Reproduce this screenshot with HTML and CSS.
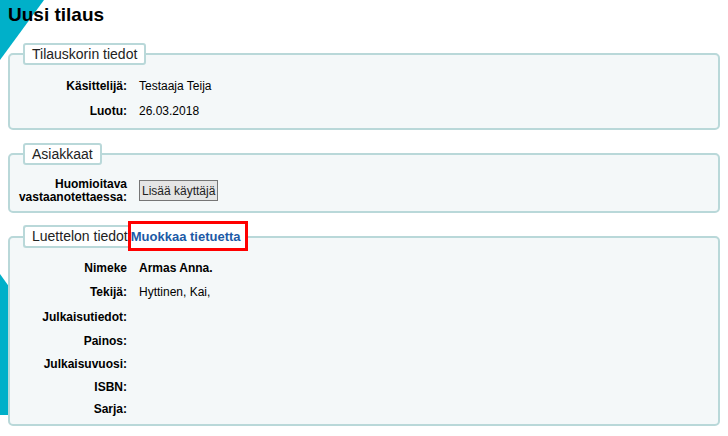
FILE: index.html
```html
<!DOCTYPE html>
<html lang="fi">
<head>
<meta charset="utf-8">
<title>Uusi tilaus</title>
<link rel="stylesheet" href="styles.css">
</head>
<body>
<svg class="deco" width="60" height="436" viewBox="0 0 60 436" aria-hidden="true">
  <polygon points="0,0 44,0 0,60" fill="#00b0c9"/>
  <polygon points="0,274 20,302 20,415 0,415" fill="#00b0c9"/>
</svg>
<h1 class="title">Uusi tilaus</h1>

<fieldset class="box box-first">
  <legend class="box-legend">Tilauskorin tiedot</legend>
  <div class="row r25"><span class="lbl">Käsittelijä:</span><span class="val">Testaaja Teija</span></div>
  <div class="row r25"><span class="lbl">Luotu:</span><span class="val">26.03.2018</span></div>
</fieldset>

<fieldset class="box box-second">
  <legend class="box-legend">Asiakkaat</legend>
  <div class="row row-multi"><span class="lbl lbl-multi">Huomioitava vastaanotettaessa:</span><span class="val"><button class="btn" type="button">Lisää käyttäjä</button></span></div>
</fieldset>

<fieldset class="box box-third">
  <legend class="box-legend legend-link">Luettelon tiedot<a class="edit-link" href="#">Muokkaa tietuetta</a></legend>
  <div class="row h23"><span class="lbl">Nimeke</span><span class="val val-bold">Armas Anna.</span></div>
  <div class="row h26"><span class="lbl">Tekijä:</span><span class="val">Hyttinen, Kai,</span></div>
  <div class="row h24"><span class="lbl">Julkaisutiedot:</span><span class="val"></span></div>
  <div class="row h23"><span class="lbl">Painos:</span><span class="val"></span></div>
  <div class="row h23"><span class="lbl">Julkaisuvuosi:</span><span class="val"></span></div>
  <div class="row h23"><span class="lbl">ISBN:</span><span class="val"></span></div>
  <div class="row h22"><span class="lbl">Sarja:</span><span class="val"></span></div>
</fieldset>
</body>
</html>
```
FILE: styles.css
```css
html {
  background: #ffffff;
}
body {
  margin: 0;
  padding: 0 8px;
  font-family: "Liberation Sans", Arial, sans-serif;
  font-size: 12px;
  color: #000;
  position: relative;
}
.deco {
  position: absolute;
  left: 0;
  top: 0;
  z-index: -1;
}
.title {
  margin: 4px 0 0;
  font-size: 19px;
  line-height: 22px;
  font-weight: bold;
  color: #000;
}
.box {
  margin: 0;
  padding: 8px 0 5px;
  border: 2px solid #b9d8d9;
  border-radius: 5px;
  background: #f4f8f9;
  min-width: 0;
}
.box-first { margin-top: 17px; }
.box-second { margin-top: 13px; padding-bottom: 5px; }
.box-third { margin-top: 12px; padding-bottom: 4px; }
.box-legend {
  margin-left: 13px;
  padding: 1px 7px;
  border: 2px solid #b9d8d9;
  border-radius: 3px;
  background: #fff;
  font-size: 14px;
  line-height: 16px;
  color: #222;
}
.legend-link {
  padding-right: 0;
  border-right: 0;
}
.edit-link {
  display: inline-block;
  margin: -8px 0 -6px;
  padding: 5px 4px 3px 0;
  border: 3px solid #ff0000;
  background: #fff;
  font-size: 13px;
  line-height: 16px;
  font-weight: bold;
  color: #1c5aa6;
  text-decoration: none;
}
.row {
  display: flex;
  align-items: center;
}
.r25 { height: 25px; }
.h22 { height: 22px; }
.h23 { height: 23px; }
.h24 { height: 24px; }
.h26 { height: 26px; }
.lbl {
  flex: 0 0 117px;
  text-align: right;
  font-weight: bold;
  line-height: 14px;
}
.val {
  margin-left: 12px;
  line-height: 14px;
}
.val-bold { font-weight: bold; }
.row-multi {
  padding: 4px 0 2px;
}
.lbl-multi {
  line-height: 13px;
  padding-top: 1px;
}
.btn {
  margin: 0;
  padding: 1px 2px;
  height: 21px;
  border: 1px solid #767676;
  border-radius: 0;
  background: #e5e5e5;
  font-family: "Liberation Sans", Arial, sans-serif;
  font-size: 12px;
  line-height: 16px;
  color: #222;
}
```
